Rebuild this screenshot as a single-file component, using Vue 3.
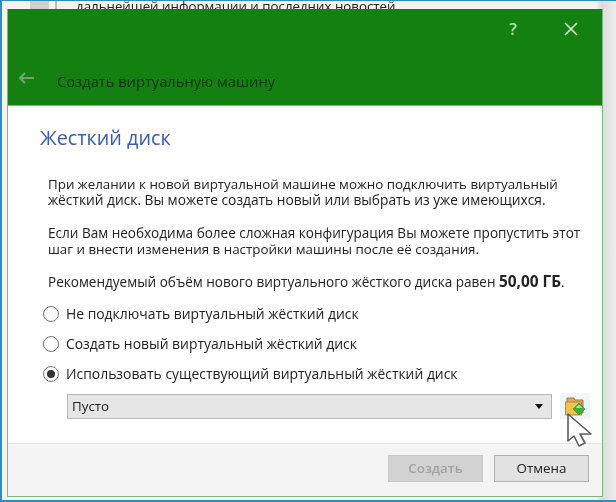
<script setup>
const options = [
  { label: 'Не подключать виртуальный жёсткий диск', on: false },
  { label: 'Создать новый виртуальный жёсткий диск', on: false },
  { label: 'Использовать существующий виртуальный жёсткий диск', on: true },
]
</script>

<template>
  <div class="screen">
    <div class="behind">
      <div class="behind-strip"></div>
      <div class="behind-line"></div>
      <div class="behind-text">дальнейшей информации и последних новостей</div>
    </div>
    <div class="dialog">
      <header class="head">
        <div class="head-top">
          <span class="help">?</span>
          <svg class="close" width="14" height="14" viewBox="0 0 14 14"><path d="M1 1l12 12M13 1L1 13" stroke="#d4f0d0" stroke-width="1.7" fill="none"/></svg>
        </div>
        <div class="head-title">
          <svg class="back" width="16" height="12" viewBox="0 0 16 12"><path d="M16 6H2M7 1L2 6l5 5" stroke="#6fa56b" stroke-width="2" fill="none"/></svg>
          <span>Создать виртуальную машину</span>
        </div>
      </header>
      <main class="body">
        <h1>Жесткий диск</h1>
        <p class="p1">При желании к новой виртуальной машине можно подключить виртуальный<br><span class="wide">жёсткий диск. Вы можете создать новый или выбрать из уже имеющихся.</span></p>
        <p class="p2"><span class="mid">Если Вам необходима более сложная конфигурация Вы можете пропустить этот</span><br>шаг и внести изменения в настройки машины после её создания.</p>
        <p class="p3"><span class="mid">Рекомендуемый объём нового виртуального жёсткого диска равен</span> <b>50,00 ГБ</b>.</p>
        <div class="options">
          <div v-for="o in options" :key="o.label" class="opt">
            <span class="radio"><i v-if="o.on"></i></span>
            <span>{{ o.label }}</span>
          </div>
        </div>
        <div class="select-row">
          <div class="select">
            <span>Пусто</span>
            <span class="caret"></span>
          </div>
          <div class="folder-btn">
            <svg width="22" height="21" viewBox="0 0 22 21">
              <path d="M3 2h7l1 2h8v13H3z" fill="#d9a860" stroke="#a8783c"/>
              <path d="M1.500 6h16v13h-16z" fill="#f0c24e" stroke="#b58a3a"/>
              <path d="M15 7l6 6-6 6-6-6z" fill="#3fae3a" stroke="#2b8a2b" stroke-width=".6"/>
              <path d="M15 8.500l3.500 3.500h-7z" fill="#a5e49a"/>
            </svg>
          </div>
        </div>
      </main>
      <footer class="foot">
        <div class="btn disabled">Создать</div>
        <div class="btn">Отмена</div>
      </footer>
    </div>
    <svg class="cursor" width="32" height="40" viewBox="0 0 32 40">
      <path d="M4 5v27l6-5 5 10 6-3-5-9h11z" fill="#fff" stroke="#5c5c5c" stroke-width="1.6" stroke-linejoin="round"/>
    </svg>
  </div>
</template>

<style scoped>
.screen {
  position: relative;
  width: 616px;
  height: 502px;
  box-sizing: border-box;
  overflow: hidden;
  background: #e6e6e6;
  border-style: solid;
  border-color: #2b8fc4;
  border-width: 1px 0 2px 2px;
  padding: 8px 13px 4px 5px;
  font-family: "Open Sans", "Noto Sans", sans-serif;
  color: #222;
  filter: blur(0.35px);
}
.behind {
  position: absolute;
  inset: 0;
  background: linear-gradient(90deg, #f2f2f2 0, #f2f2f2 594px, #dcdcdc 600px, #ececec 614px);
}
.behind-strip {
  position: absolute;
  left: 28px;
  top: 0;
  width: 19px;
  height: 10px;
  background: #cfcfcf;
}
.behind-line {
  position: absolute;
  left: 53px;
  top: 0;
  width: 2px;
  height: 10px;
  background: #bdbdbd;
}
.behind-text {
  position: absolute;
  left: 74px;
  top: -3px;
  font-size: 13.3px;
  line-height: 16px;
  white-space: nowrap;
}
.dialog {
  position: relative;
  height: 100%;
  display: flex;
  flex-direction: column;
  background: #fff;
  border: 1px solid #7fb57f;
  border-top: 0;
}
.head {
  height: 97px;
  flex: none;
  box-sizing: border-box;
  background: #158012;
  border-bottom: 1px solid #6fbf7a;
  display: flex;
  flex-direction: column;
}
.head-top {
  height: 40px;
  flex: none;
  display: flex;
  justify-content: flex-end;
  align-items: center;
  gap: 47px;
  padding-right: 24px;
}
.help {
  color: #a8e6a0;
  font-size: 17px;
  font-weight: 600;
  line-height: 40px;
}
.close { display: block; }
.head-title {
  margin-top: 22px;
  display: flex;
  align-items: center;
  font-size: 14.7px;
  line-height: 20px;
  color: #04350a;
  padding-left: 10px;
}
.back { margin: 0 23px 6px 0; }
.body {
  flex: 1;
  padding-left: 32px;
  min-height: 0;
}
h1 {
  margin: 18px 0 0;
  font-size: 19.8px;
  font-weight: 400;
  line-height: 28px;
  color: #3a5cb0;
}
p {
  margin: 0;
  padding-left: 8px;
  font-size: 13.35px;
  line-height: 16px;
  white-space: nowrap;
}
p .wide { font-size: 13.75px; }
p .mid { font-size: 13.55px; }
p b { font-size: 15.4px; }
.p1 { margin-top: 24px; }
.p2 { margin-top: 17px; }
.p3 { margin-top: 17px; }
.options {
  margin-top: 15px;
  margin-left: 3px;
  display: flex;
  flex-direction: column;
  gap: 12px;
}
.opt {
  display: flex;
  align-items: center;
  gap: 7px;
  font-size: 13.9px;
  line-height: 18px;
}
.radio {
  width: 14px;
  height: 14px;
  border: 1.5px solid #777;
  border-radius: 50%;
  background: #fff;
  display: flex;
  align-items: center;
  justify-content: center;
  flex: none;
}
.radio i {
  width: 8px;
  height: 8px;
  border-radius: 50%;
  background: #333;
}
.select-row {
  margin-top: 10px;
  margin-left: 27px;
  display: flex;
  align-items: center;
  gap: 8px;
}
.select {
  width: 485px;
  height: 25px;
  box-sizing: border-box;
  background: #e6e6e6;
  border: 1px solid #b8b8b8;
  display: flex;
  align-items: center;
  justify-content: space-between;
  padding: 0 8px 0 4px;
  font-size: 13.35px;
}
.caret {
  width: 0;
  height: 0;
  border-left: 4px solid transparent;
  border-right: 4px solid transparent;
  border-top: 5px solid #111;
}
.folder-btn {
  width: 30px;
  height: 26px;
  background: #eef5fc;
  display: flex;
  align-items: center;
  justify-content: center;
}
.foot {
  flex: none;
  height: 53px;
  box-sizing: border-box;
  background: #f4f4f4;
  border-top: 1px solid #e8e8e8;
  display: flex;
  justify-content: flex-end;
  align-items: flex-start;
  gap: 11px;
  padding: 11px 13px 0 0;
}
.btn {
  width: 95px;
  height: 27px;
  box-sizing: border-box;
  background: #e2e2e2;
  border: 1px solid #b0b0b0;
  font-size: 13.35px;
  line-height: 25px;
  text-align: center;
}
.btn.disabled {
  color: #a2a2a2;
  background: #d2d2d2;
  border-color: #c8c8c8;
  font-weight: 600;
}
.cursor {
  position: absolute;
  left: 562px;
  top: 408px;
}
</style>
